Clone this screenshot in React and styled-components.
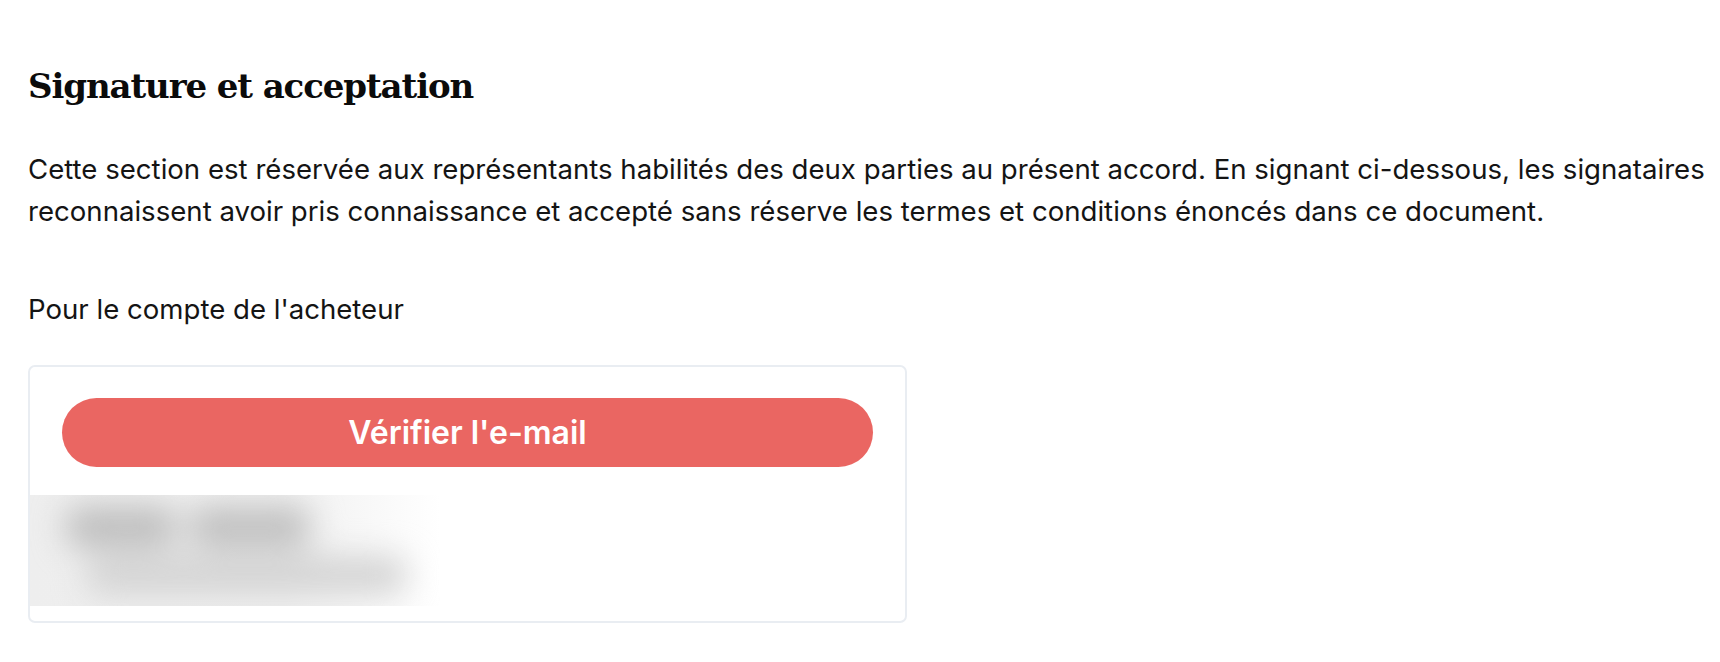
import styled, { createGlobalStyle } from "styled-components";

const GlobalStyle = createGlobalStyle`
  body {
    margin: 0;
    background: #fff;
    color: #111;
    font-family: Inter, "Noto Sans", sans-serif;
  }
`;

const Section = styled.section`
  padding: 58px 10px 30px 28px;
`;

const Title = styled.h2`
  margin: 0 0 34px 0;
  font-family: "DejaVu Serif", "Liberation Serif", serif;
  font-weight: 700;
  font-size: 34px;
  line-height: 56px;
  color: #0b0b0b;
  letter-spacing: -1.1px;
`;

const Intro = styled.p`
  margin: 0 0 56px 0;
  font-size: 27.6px;
  line-height: 42px;
  color: #141414;
`;

const PartyLabel = styled.p`
  margin: 0 0 35px 0;
  font-size: 27.6px;
  line-height: 42px;
  color: #141414;
`;

const Card = styled.div`
  width: 879px;
  box-sizing: border-box;
  border: 2px solid #e9edf2;
  border-radius: 7px;
  padding: 31px 32px 15px 32px;
`;

const VerifyButton = styled.button`
  display: block;
  width: 100%;
  height: 69px;
  border: none;
  border-radius: 35px;
  background: #ea6662;
  color: #fff;
  font-family: Inter, "Noto Sans", sans-serif;
  font-weight: 600;
  font-size: 32px;
  cursor: pointer;
`;

const Redacted = styled.div`
  margin: 28px 0 0 -32px;
  width: 410px;
  height: 111px;
  overflow: hidden;
  background: linear-gradient(90deg, #eeeeee 0%, #f0f0f0 62%, #fff 100%);
`;

const BlurLayer = styled.div`
  filter: blur(16px);
  padding: 12px 0 0 36px;
  display: flex;
  flex-direction: column;
  gap: 10px;
`;

const BlobRow = styled.div`
  display: flex;
  gap: ${(p) => p.$gap || 0}px;
  margin-left: ${(p) => p.$x || 0}px;
`;

const Blob = styled.div`
  height: ${(p) => p.$h}px;
  width: ${(p) => p.$w}px;
  background: ${(p) => p.$c};
  border-radius: 14px;
`;

export default function App() {
  return (
    <>
      <GlobalStyle />
      <Section>
        <Title>Signature et acceptation</Title>
        <Intro>
          Cette section est réservée aux représentants habilités des deux parties au présent accord. En signant ci-dessous, les signataires reconnaissent avoir pris connaissance et accepté sans réserve les termes et conditions énoncés dans ce document.
        </Intro>
        <PartyLabel>Pour le compte de l'acheteur</PartyLabel>
        <Card>
          <VerifyButton>Vérifier l'e-mail</VerifyButton>
          <Redacted>
            <BlurLayer>
              <BlobRow $gap={14}>
                <Blob $w={110} $h={40} $c="#bdbdbd" />
                <Blob $w={120} $h={40} $c="#bfbfbf" />
              </BlobRow>
              <BlobRow $x={20}>
                <Blob $w={320} $h={36} $c="#d2d2d2" />
              </BlobRow>
            </BlurLayer>
          </Redacted>
        </Card>
      </Section>
    </>
  );
}
